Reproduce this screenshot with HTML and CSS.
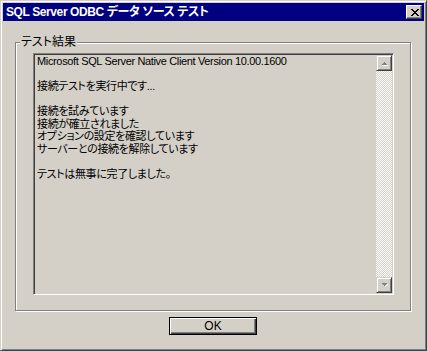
FILE: index.html
```html
<!DOCTYPE html>
<html lang="ja">
<head>
    <meta charset="UTF-8">
    <title>SQL Server ODBC データ ソース テスト</title>
    <link rel="stylesheet" href="styles.css">
</head>
<body>
    <div class="window">
        <div class="titlebar">
            <span class="title">SQL Server ODBC データ ソース テスト</span>
            <button class="close-btn" aria-label="閉じる">
                <svg width="8" height="7" viewBox="0 0 8 7" shape-rendering="crispEdges">
                    <path d="M0 0h2v1h-2zM6 0h2v1h-2zM1 1h2v1h-2zM5 1h2v1h-2zM2 2h4v1h-4zM3 3h2v1h-2zM2 4h4v1h-4zM1 5h2v1h-2zM5 5h2v1h-2zM0 6h2v1h-2zM6 6h2v1h-2z" fill="#000"/>
                </svg>
            </button>
        </div>

        <div class="dialog-body">
            <fieldset class="group">
                <legend>テスト結果</legend>
                <div class="output">
                    <div class="output-text">Microsoft SQL Server Native Client Version 10.00.1600

接続テストを実行中です...

接続を試みています
接続が確立されました
オプションの設定を確認しています
サーバーとの接続を解除しています

テストは無事に完了しました。</div>
                    <div class="scrollbar">
                        <div class="sb-btn">
                            <svg width="7" height="5" viewBox="0 0 7 5" shape-rendering="crispEdges">
                                <path d="M3 1h1v1h-1zM2 2h3v1h-3zM1 3h5v1h-5z" fill="#808080"/>
                                <path d="M6 4h1v1h-6v-1z" fill="#fff"/>
                            </svg>
                        </div>
                        <div class="sb-track"></div>
                        <div class="sb-btn">
                            <svg width="7" height="5" viewBox="0 0 7 5" shape-rendering="crispEdges">
                                <path d="M1 0h5v1h-5zM2 1h3v1h-3zM3 2h1v1h-1z" fill="#808080"/>
                                <path d="M6 1h1v1h-1zM5 2h1v1h-1zM4 3h1v1h-1z" fill="#fff"/>
                            </svg>
                        </div>
                    </div>
                </div>
            </fieldset>

            <div class="actions">
                <button class="ok-btn">OK</button>
            </div>
        </div>
    </div>
</body>
</html>
```

FILE: styles.css
```css
* { margin: 0; padding: 0; box-sizing: border-box; }
body { background: #d4d0c8; font-family: 'Liberation Sans', 'Noto Sans CJK JP', sans-serif; font-size: 12px; color: #000; font-feature-settings: "palt"; }

/* ウィンドウ枠 */
.window { width: 427px; height: 351px; background: #d4d0c8; border: 1px solid; border-color: #d4d0c8 #404040 #404040 #d4d0c8; box-shadow: inset 1px 1px #fff, inset -1px -1px #808080; padding: 2px; display: flex; flex-direction: column; }

/* タイトルバー */
.titlebar { height: 18px; background: #000080; display: flex; align-items: center; justify-content: space-between; padding: 0 2px 0 3px; }
.title { color: #fff; font-weight: bold; font-size: 12px; line-height: 18px; letter-spacing: -0.4px; white-space: nowrap; }
.close-btn { width: 16px; height: 14px; background: #d4d0c8; border: 1px solid; border-color: #fff #404040 #404040 #fff; box-shadow: inset -1px -1px #808080; display: flex; align-items: center; justify-content: center; padding: 0 0 0 1px; }
.close-btn svg { display: block; }

.dialog-body { flex: 1; display: flex; flex-direction: column; padding: 0 13px 0 12px; }

/* グループボックス */
.group { margin-top: 14px; border: 1px solid #808080; box-shadow: inset 1px 1px #fff, 1px 1px #fff; padding: 4px 16px 15px 4px; min-width: 0; }
.group legend { padding: 0 1px; line-height: 14px; background: #d4d0c8; }

/* 結果表示エリア */
.output { margin-left: 13px; height: 242px; border: 1px solid; border-color: #808080 #fff #fff #808080; box-shadow: inset 1px 1px #404040, inset -1px -1px #d4d0c8; padding: 1px; display: flex; }
.output-text { flex: 1; white-space: pre; font-size: 11px; letter-spacing: -0.35px; line-height: 12.5px; padding: 0 0 0 2px; overflow: hidden; }

/* スクロールバー */
.scrollbar { width: 16px; display: flex; flex-direction: column; }
.sb-btn { width: 16px; height: 16px; background: #d4d0c8; border: 1px solid; border-color: #d4d0c8 #404040 #404040 #d4d0c8; box-shadow: inset 1px 1px #fff, inset -1px -1px #808080; display: flex; align-items: center; justify-content: center; }
.sb-btn svg { display: block; }
.sb-track { flex: 1; background-color: #d4d0c8; background-image: conic-gradient(#fff 25%, #d4d0c8 0 50%, #fff 0 75%, #d4d0c8 0); background-size: 2px 2px; }

/* ボタン */
.actions { display: flex; justify-content: center; padding-top: 6px; }
.ok-btn { width: 88px; height: 18px; font: inherit; font-size: 12px; background: #d4d0c8; border: 1px solid #000; box-shadow: inset 1px 1px #fff, inset -1px -1px #404040, inset -2px -2px #808080; color: #000; }
```
